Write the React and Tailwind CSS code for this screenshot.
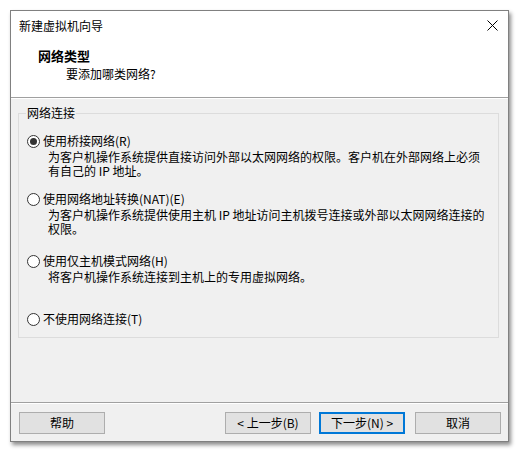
import React from 'react';

const font = { fontFamily: '"Noto Sans CJK SC", "Noto Sans", sans-serif' };

function Radio({ checked, label }) {
  return (
    <div className="flex items-center h-[16px]">
      <span className="w-[13px] h-[13px] rounded-full border border-[#333333] bg-white flex items-center justify-center shrink-0">
        {checked && <span className="w-[7px] h-[7px] rounded-full bg-[#333333]" />}
      </span>
      <span className="ml-[3px] leading-[16px]">{label}</span>
    </div>
  );
}

function Btn({ children, primary }) {
  return (
    <div
      className={
        'w-[86px] h-[22px] flex items-center justify-center bg-[#e1e1e1] leading-[16px] ' +
        (primary ? 'border-2 border-[#0078d7]' : 'border border-[#adadad]')
      }
    >
      {children}
    </div>
  );
}

export default function App() {
  return (
    <div className="w-[520px] h-[454px] bg-white pl-[10px] pt-[10px] text-[12px] text-black" style={font}>
      <div className="w-[499px] h-[432px] border border-[#808080] bg-[#f0f0f0] flex flex-col shadow-[2px_3px_4px_rgba(0,0,0,0.45)]">
        {/* title bar */}
        <div className="h-[29px] bg-white flex items-center justify-between pl-[8px] pr-[10px]">
          <span className="leading-[16px]">新建虚拟机向导</span>
          <svg width="11" height="11" viewBox="0 0 11 11">
            <path d="M0.5 0.5 L10.5 10.5 M10.5 0.5 L0.5 10.5" stroke="#000" strokeWidth="1" />
          </svg>
        </div>
        {/* header */}
        <div className="h-[57px] bg-white pt-[8px] pl-[27px]">
          <div className="font-bold text-[13px] leading-[16px]">网络类型</div>
          <div className="mt-[2px] pl-[28px] leading-[16px]">要添加哪类网络?</div>
        </div>
        <div className="h-px bg-[#a0a0a0]" />
        <div className="h-px bg-white" />

        {/* body */}
        <div className="flex-1 pt-[14px] pl-[7px]">
          <div className="relative w-[481px] h-[225px] border border-[#dcdcdc] pt-[19px] pl-[8px]">
            <span className="absolute left-[7px] -top-[9px] px-[1px] bg-[#f0f0f0] leading-[16px]">网络连接</span>

            <Radio checked label="使用桥接网络(R)" />
            <div className="pl-[21px] mt-[1px] leading-[14px]">
              <div>为客户机操作系统提供直接访问外部以太网网络的权限。客户机在外部网络上必须</div>
              <div>有自己的 IP 地址。</div>
            </div>

            <div className="mt-[13px]">
              <Radio label="使用网络地址转换(NAT)(E)" />
            </div>
            <div className="pl-[21px] mt-[1px] leading-[14px]">
              <div>为客户机操作系统提供使用主机 IP 地址访问主机拨号连接或外部以太网网络连接的</div>
              <div>权限。</div>
            </div>

            <div className="mt-[17px]">
              <Radio label="使用仅主机模式网络(H)" />
            </div>
            <div className="pl-[21px] mt-[1px] leading-[14px]">
              <div>将客户机操作系统连接到主机上的专用虚拟网络。</div>
            </div>

            <div className="mt-[27px]">
              <Radio label="不使用网络连接(T)" />
            </div>
          </div>
        </div>

        {/* footer */}
        <div className="h-px bg-[#a0a0a0]" />
        <div className="h-px bg-white" />
        <div className="h-[37px] flex items-start justify-between pt-[8px] pl-[8px] pr-[7px]">
          <Btn>帮助</Btn>
          <div className="flex">
            <div className="mr-[8px]"><Btn>&lt; 上一步(B)</Btn></div>
            <div className="mr-[10px]"><Btn primary>下一步(N) &gt;</Btn></div>
            <Btn>取消</Btn>
          </div>
        </div>
      </div>
    </div>
  );
}
